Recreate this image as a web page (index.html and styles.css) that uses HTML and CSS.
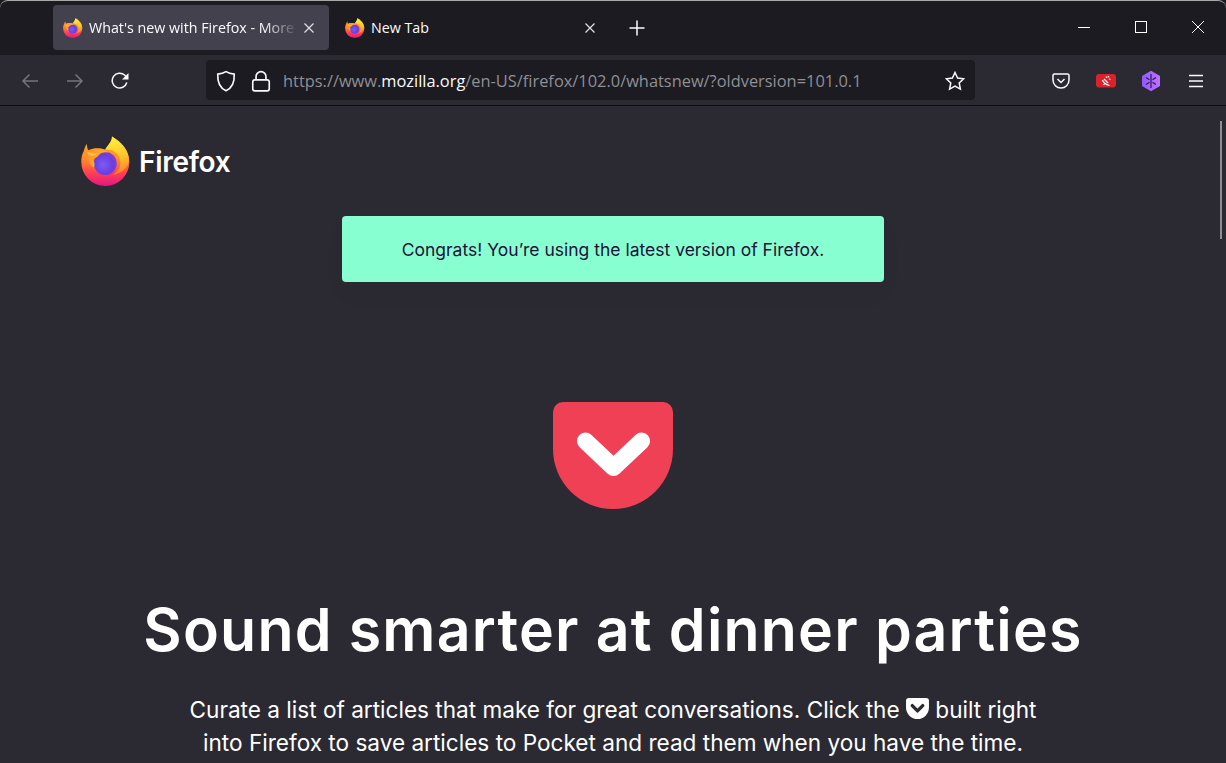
FILE: index.html
```html
<!DOCTYPE html>
<html lang="en">
<head>
<meta charset="utf-8">
<title>What's new with Firefox</title>
<link rel="stylesheet" href="styles.css">
</head>
<body>
<svg class="defs" width="0" height="0" aria-hidden="true">
  <defs>
    <linearGradient id="ffBody" x1="0.5" y1="0.1" x2="0.5" y2="1">
      <stop offset="0" stop-color="#ffa82a"/>
      <stop offset="0.4" stop-color="#ff8a2c"/>
      <stop offset="0.72" stop-color="#ff3d55"/>
      <stop offset="1" stop-color="#e31587"/>
    </linearGradient>
    <linearGradient id="ffFlame" x1="0.4" y1="0" x2="0.6" y2="1">
      <stop offset="0" stop-color="#fff13a"/>
      <stop offset="0.55" stop-color="#ffc62a"/>
      <stop offset="1" stop-color="#ff7f2c"/>
    </linearGradient>
    <linearGradient id="ffHead" x1="0" y1="0" x2="1" y2="0.4">
      <stop offset="0" stop-color="#ff8a24"/>
      <stop offset="1" stop-color="#ffb52e"/>
    </linearGradient>
    <radialGradient id="ffGlobe" cx="0.42" cy="0.55" r="0.6">
      <stop offset="0" stop-color="#7d5cf0"/>
      <stop offset="0.7" stop-color="#6a3de0"/>
      <stop offset="1" stop-color="#8b3fd0"/>
    </radialGradient>
    <symbol id="firefox" viewBox="0 0 50 50">
      <path fill="url(#ffBody)" d="M5.800 8C6 12 7 14 8 15.500 9.500 13.500 11 12.800 13 12.500 17 11.800 21 12.500 24 13.500 27 9 31 6 31 .6 40 6 48.300 14 48.300 26A24 24 0 0 1 .3 26C.3 22 1 18 3 14.500 3.500 12 4.500 9.500 5.800 8Z"/>
      <path fill="url(#ffFlame)" d="M31 .6C31 6 27 9 24.500 13.500 30 12.800 37 16 39 23 40.500 29 38 35.500 32 38.500 40 37.500 47 32 48 25 48 14 40 6 31 .6Z"/>
      <circle cx="24.300" cy="27.500" r="11.500" fill="url(#ffGlobe)"/>
      <path fill="url(#ffHead)" d="M2.500 17C5 14.500 8 13.500 12 13 18 12.300 23 13.500 27 16.500 22.500 15.500 19.500 17 18 19 16.500 21 14 22.500 11 23 14 25.500 14 29 13 31.500 9 30 7 25 7.500 21 6 19.500 4.500 18 2.500 17Z"/>
      <path fill="#ffc04a" d="M5.500 15.500C9 16.500 12 18 16 17.800 14 20 10 20.500 7.500 18.500Z"/>
    </symbol>
  </defs>
</svg>
<div class="window">
  <header class="titlebar">
    <div class="tab tab-active">
      <svg class="favicon"><use href="#firefox"/></svg>
      <span class="tab-label tab-label-fade">What's new with Firefox - More p</span>
      <svg class="tab-close" viewBox="0 0 12 12"><path d="M1.500 1.500l9 9M10.500 1.500l-9 9"/></svg>
    </div>
    <div class="tab tab-idle">
      <svg class="favicon"><use href="#firefox"/></svg>
      <span class="tab-label">New Tab</span>
      <svg class="tab-close" viewBox="0 0 12 12"><path d="M1.500 1.500l9 9M10.500 1.500l-9 9"/></svg>
    </div>
    <svg class="new-tab" viewBox="0 0 16 16"><path d="M8 .5v15M.5 8h15"/></svg>
    <div class="win-controls">
      <svg class="win-btn" viewBox="0 0 14 14"><path d="M1 7.500h12"/></svg>
      <svg class="win-btn" viewBox="0 0 14 14"><rect x="1.500" y="1.500" width="11" height="11"/></svg>
      <svg class="win-btn win-close" viewBox="0 0 14 14"><path d="M1 1l12 12M13 1L1 13"/></svg>
    </div>
  </header>
  <nav class="toolbar">
    <div class="nav-btn dim"><svg viewBox="0 0 18 18"><path d="M17 9H2M8.500 2.500L2 9l6.500 6.500"/></svg></div>
    <div class="nav-btn dim"><svg viewBox="0 0 18 18"><path d="M1 9h15M9.500 2.500L16 9l-6.500 6.500"/></svg></div>
    <div class="nav-btn"><svg viewBox="0 0 18 18"><path d="M15.800 10.500A7.400 7.400 0 1 1 13.800 3.300L16.500 6"/><path class="solid" d="M17.500 1v6.500H11z"/></svg></div>
    <div class="urlbar">
      <svg class="url-icon" viewBox="0 0 18 20"><path d="M9 1.500c2.500 1.500 4.800 2 7.500 2.300.3 7-1.800 12.500-7.500 15-5.700-2.500-7.800-8-7.500-15C4.200 3.500 6.500 3 9 1.500z"/></svg>
      <svg class="url-icon lock" viewBox="0 0 18 20"><rect x="1.500" y="9" width="15" height="10" rx="2"/><path d="M4.500 9V6a4.500 4.500 0 0 1 9 0v3"/></svg>
      <span class="url"><span class="url-dim">https://www.</span><span class="url-host">mozilla.org</span><span class="url-dim">/en-US/firefox/102.0/whatsnew/?oldversion=101.0.1</span></span>
      <svg class="url-icon star" viewBox="0 0 20 20"><path d="M10 1.500l2.600 5.600 6 .7-4.400 4.200 1.200 6.100L10 15.100l-5.400 3 1.200-6.100L1.400 7.800l6-.7z"/></svg>
    </div>
    <div class="toolbar-end">
      <div class="nav-btn"><svg viewBox="0 0 18 18"><path d="M2.500 2h13A1.500 1.500 0 0 1 17 3.500V8A8 8 0 0 1 1 8V3.500A1.500 1.500 0 0 1 2.500 2z"/><path d="M5.500 7L9 10.500 12.500 7"/></svg></div>
      <div class="nav-btn ext"><svg viewBox="0 0 20 22"><rect class="ext-red" x="0" y="4" width="20" height="13.500" rx="3"/><path class="ext-red-mark" d="M6.500 10c1 3 3 4.500 7 5.500M8 9l4 4M10 6.500l1 1.500M12 6l1 1.500M13 9l1.500.5M9 13l-1.500 2"/></svg></div>
      <div class="nav-btn ext"><svg viewBox="0 0 20 22"><defs><linearGradient id="hexFill" x1="0" y1="0" x2="1" y2="0"><stop offset="0" stop-color="#9059ff"/><stop offset="1" stop-color="#c070ff"/></linearGradient></defs><path class="ext-hex" d="M10 .8L19 6v10l-9 5.200L1 16V6z"/><path class="ext-hex-mark" d="M10 4v14M5 7.500l3.500 2.300M15 7.500l-3.500 2.300M5 14.500l3.500-2.300M15 14.500l-3.500-2.300"/></svg></div>
      <div class="nav-btn"><svg viewBox="0 0 18 18"><path d="M2 3.500h14M2 9h14M2 14.500h14"/></svg></div>
    </div>
  </nav>
  <main class="page">
    <div class="brand">
      <svg class="brand-logo"><use href="#firefox"/></svg>
      <span class="brand-name">Firefox</span>
    </div>
    <div class="notice">Congrats! You’re using the latest version of Firefox.</div>
    <svg class="pocket-hero" viewBox="0 0 120 107">
      <path class="pocket-red" d="M10 0H110A10 10 0 0 1 120 10V47A60 60 0 0 1 0 47V10A10 10 0 0 1 10 0Z"/>
      <path class="pocket-check" d="M32.400 39L60.500 65.500 88.600 39"/>
    </svg>
    <h1 class="headline">Sound smarter at dinner parties</h1>
    <p class="lede">Curate a list of articles that make for great conversations. Click the <svg class="pocket-inline" viewBox="0 0 24 22"><path class="pocket-white" d="M3 0H21A3 3 0 0 1 24 3V10A12 12 0 0 1 0 10V3A3 3 0 0 1 3 0Z"/><path class="pocket-inline-check" d="M6.500 8L12 13.500 17.500 8"/></svg> built right into Firefox to save articles to Pocket and read them when you have the time.</p>
    <div class="scroll-thumb"></div>
  </main>
</div>
</body>
</html>
```
FILE: styles.css
```css
* { box-sizing: border-box; }
html, body { margin: 0; height: 100%; overflow: hidden; background: #2b2a33; }
.defs { position: absolute; }
.window { display: flex; flex-direction: column; height: 763px; width: 1226px; background: #1c1b22; }

.titlebar {
  height: 55px; flex: none; display: flex; align-items: flex-start; padding: 5px 0 0 53px;
  background: #1c1b22; border-top: 1px solid #a8a8a8; border-radius: 8px 8px 0 0;
  font-family: "Open Sans", "Noto Sans", sans-serif; font-size: 14.250px; color: #fbfbfe;
}
.tab { display: flex; align-items: center; height: 45px; margin-top: -1px; border-radius: 4px; padding-left: 10px; }
.tab-active { width: 276px; background: #42414d; }
.tab-idle { width: 276px; margin-left: 5px; padding-left: 11px; }
.favicon { width: 20px; height: 20px; flex: none; margin-right: 6px; }
.tab-label { flex: 1; overflow: hidden; white-space: nowrap; min-width: 0; }
.tab-label-fade { -webkit-mask-image: linear-gradient(to right, #000 82%, transparent 99%); mask-image: linear-gradient(to right, #000 82%, transparent 99%); }
.tab-close { width: 12px; height: 12px; flex: none; margin: 0 14px 0 2px; fill: none; stroke: #e0e0e6; stroke-width: 1.200; }
.new-tab { width: 16px; height: 16px; margin: 14px 0 0 19px; fill: none; stroke: #fbfbfe; stroke-width: 1.500; flex: none; }
.win-controls { margin-left: auto; display: flex; gap: 42.500px; padding: 14px 21px 0 0; }
.win-btn { width: 14px; height: 14px; fill: none; stroke: #fff; stroke-width: 1; position: relative; left: -1px; }
.win-close { left: 0; }

.toolbar {
  height: 51px; flex: none; display: flex; align-items: center; padding: 0 7.500px 1px 7.500px;
  background: #2b2a33; border-bottom: 1px solid #0c0c0d;
}
.nav-btn { width: 45px; height: 40px; flex: none; display: flex; align-items: center; justify-content: center; padding-top: 2px; }
.nav-btn svg { width: 18px; height: 18px; fill: none; stroke: #fbfbfe; stroke-width: 1.500; }
.nav-btn.ext svg { width: 20px; height: 22px; }
.nav-btn .solid { fill: #fbfbfe; stroke: none; }
.nav-btn.dim svg { stroke: #75747b; }
.urlbar {
  width: 769px; height: 40px; margin-left: 63.500px; display: flex; align-items: center; padding: 2px 10px 0 10px;
  background: #1c1b22; border-radius: 4px;
  font-family: "Open Sans", "Noto Sans", sans-serif; font-size: 16.400px; white-space: nowrap;
}
.url-icon { width: 20px; height: 22px; flex: none; fill: none; stroke: #fbfbfe; stroke-width: 1.500; }
.url-icon.lock { margin-left: 15px; }
.url { margin-left: 12px; flex: 1; }
.url-dim { color: #8f8f94; }
.url-host { color: #fbfbfe; }
.toolbar-end { margin-left: auto; display: flex; }
.ext-red { fill: #d7232b; stroke: none; }
.ext-red-mark { stroke: #fff; stroke-width: 1.200; }
.ext-hex { fill: url(#hexFill); stroke: none; }
.ext-hex-mark { stroke: #2f1a55; stroke-width: 1.200; }

.page {
  position: relative; flex: 1; min-height: 0; overflow: hidden; padding: 30px 0 0 81px;
  display: flex; flex-direction: column; color: #fff; font-family: Inter, sans-serif; background: #2b2a33;
}
.brand { display: flex; align-items: center; height: 50px; align-self: flex-start; }
.brand-logo { width: 50px; height: 50px; flex: none; }
.brand-name { margin-left: 8px; padding-top: 1px; font-size: 28px; font-weight: 600; letter-spacing: -.3px; }
.notice {
  width: 542px; height: 66px; flex: none; margin: 30px 0 0 261px; border-radius: 4px;
  display: flex; align-items: center; justify-content: center; padding-top: 1px;
  background: #88ffd1; color: #20123a; font-size: 17.500px;
  box-shadow: 0 12px 24px rgba(0, 0, 0, .03);
}
.pocket-hero { width: 120px; height: 107px; flex: none; margin: 120px 0 0 472px; }
.pocket-red { fill: #ef4056; }
.pocket-check { fill: none; stroke: #fff; stroke-width: 17; stroke-linecap: round; stroke-linejoin: round; }
.headline { margin: 86px 0 0 -81px; width: 1226px; text-align: center; font-size: 59px; letter-spacing: 1.200px; line-height: 70px; font-weight: 600; }
.lede { margin: 28px 0 0 101px; width: 862px; text-align: center; font-size: 22.580px; line-height: 33px; }
.pocket-inline { width: 23px; height: 21px; vertical-align: -1px; }
.pocket-white { fill: #fff; }
.pocket-inline-check { fill: none; stroke: #2b2a33; stroke-width: 3.500; stroke-linecap: round; stroke-linejoin: round; }
.scroll-thumb { position: absolute; right: 4px; top: 15px; width: 2px; height: 118px; background: #8f8f92; }
```
